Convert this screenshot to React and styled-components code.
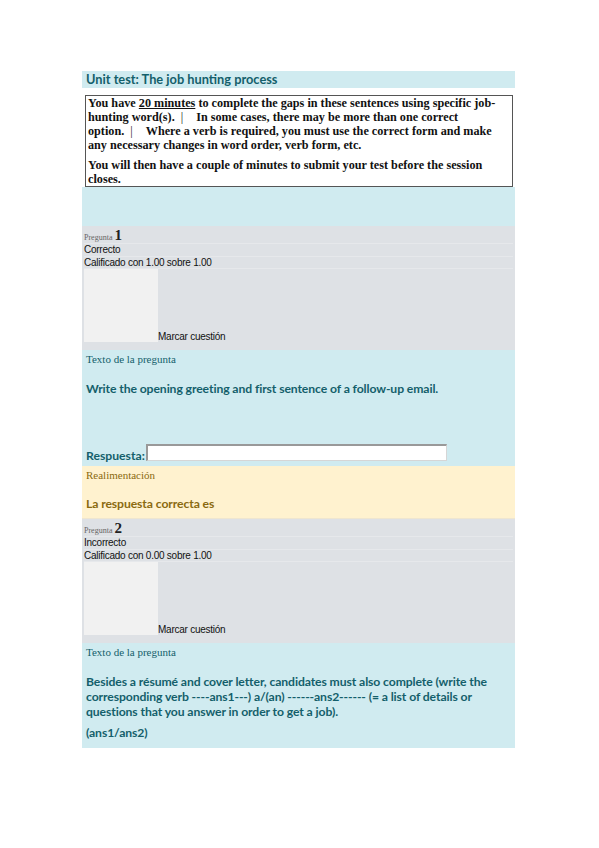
import React from 'react';
import styled, { createGlobalStyle } from 'styled-components';

const colors = {
  blue: '#d0ebf0',
  gray: '#dee1e5',
  yellow: '#fff2cf',
  flag: '#f1f1f1',
  teal: '#145f6b',
  olive: '#8a6a10',
};

const GlobalStyle = createGlobalStyle`
  body {
    margin: 0;
    background: #fff;
    font-family: "Liberation Sans", Arial, sans-serif;
  }
`;

const Page = styled.main`
  width: 433px;
  margin-left: 82px;
  padding-top: 71px;
`;

const TitleBar = styled.h2`
  margin: 0;
  height: 17px;
  background: ${colors.blue};
  color: ${colors.teal};
  font-family: Lato, "Open Sans", sans-serif;
  font-weight: 700;
  font-size: 12.8px;
  line-height: 17px;
  padding-left: 4px;
`;

const Intro = styled.section`
  padding: 7px 2px 0 3px;
  background: #fff;
`;

const IntroSpacer = styled.div`
  height: 39px;
  background: ${colors.blue};
`;

const InfoBox = styled.div`
  background: #fff;
  border: 1px solid #555;
  padding: 0 15.5px 0 2px;
  font-family: "Liberation Serif", "Times New Roman", serif;
  font-weight: 700;
  font-size: 12.2px;
  line-height: 14px;
  color: #111;

  p {
    margin: 0;
  }
  p + p {
    margin-top: 6px;
  }
`;

const Sep = styled.span`
  display: inline-block;
  margin: 0 13px 0 6px;
  font-weight: 400;
  color: #222;
`;

const Info = styled.div`
  background: ${colors.gray};
  padding: 0 2px 8px 2px;
`;

const InfoRow = styled.div`
  font-family: "Liberation Sans", Arial, sans-serif;
  font-size: 10px;
  letter-spacing: -0.25px;
  color: #111;
  height: ${({ h }) => h}px;
  line-height: ${({ h }) => h}px;
  border-bottom: 1px solid #e6e8eb;
`;

const QNumberRow = styled.div`
  height: 17px;
  display: flex;
  align-items: flex-end;
  border-bottom: 1px solid #e6e8eb;
  font-family: "Liberation Serif", "Times New Roman", serif;
`;

const QLabel = styled.span`
  font-size: 8px;
  color: #666;
  margin-right: 2px;
  padding-bottom: 1px;
`;

const QNumber = styled.span`
  font-size: 15px;
  font-weight: 700;
  color: #222;
  line-height: 15px;
`;

const FlagRow = styled.div`
  display: flex;
  align-items: flex-end;
`;

const FlagBox = styled.div`
  width: 74px;
  height: 73px;
  background: ${colors.flag};
`;

const FlagText = styled.span`
  font-size: 10px;
  letter-spacing: -0.25px;
  color: #111;
  line-height: 11px;
`;

const Content = styled.div`
  background: ${colors.blue};
  padding: 2px 4px 3px 4px;
  height: ${({ h }) => h}px;
  box-sizing: border-box;
  display: flex;
  flex-direction: column;
`;

const SmallHeading = styled.div`
  font-family: "Liberation Serif", "Times New Roman", serif;
  font-size: 11px;
  line-height: 14px;
  color: ${({ tone }) => tone};
`;

const QText = styled.p`
  margin: ${({ top }) => top}px 0 0;
  font-family: Lato, "Open Sans", sans-serif;
  font-weight: 700;
  font-size: 12.2px;
  letter-spacing: -0.1px;
  line-height: 15px;
  color: ${({ tone }) => tone || colors.teal};
`;

const AnswerRow = styled.div`
  margin-top: auto;
  display: flex;
  align-items: flex-end;
  gap: 1px;
  font-family: Lato, "Open Sans", sans-serif;
  font-weight: 700;
  font-size: 12.2px;
  color: ${colors.teal};
`;

const AnswerInput = styled.input`
  width: 301px;
  height: 17px;
  box-sizing: border-box;
  border: 1px solid #d6d6d6;
  border-top: 2px solid #999;
  border-left: 2px solid #999;
  background: #fff;
  margin: 0 0 2px;
`;

const Feedback = styled.div`
  background: ${colors.yellow};
  height: 53px;
  padding: 2px 4px 0;
  box-sizing: border-box;
  border-bottom: 1px solid #efe6d0;
`;

const Question = ({ num, state, grade, contentHeight, children }) => (
  <section>
    <Info>
      <QNumberRow>
        <QLabel>Pregunta</QLabel>
        <QNumber>{num}</QNumber>
      </QNumberRow>
      <InfoRow h={12}>{state}</InfoRow>
      <InfoRow h={11}>{grade}</InfoRow>
      <FlagRow>
        <FlagBox />
        <FlagText>Marcar cuestión</FlagText>
      </FlagRow>
    </Info>
    <Content h={contentHeight}>{children}</Content>
  </section>
);

const App = () => (
  <>
    <GlobalStyle />
    <Page>
      <TitleBar>Unit test: The job hunting process</TitleBar>
      <Intro>
        <InfoBox>
          <p>
            You have <u>20 minutes</u> to complete the gaps in these sentences
            using specific job-hunting word(s).<Sep>|</Sep>In some cases, there
            may be more than one correct option.<Sep>|</Sep>Where a verb is
            required, you must use the correct form and make any necessary
            changes in word order, verb form, etc.
          </p>
          <p>
            You will then have a couple of minutes to submit your test before
            the session closes.
          </p>
        </InfoBox>
      </Intro>
      <IntroSpacer />

      <Question
        num="1"
        state="Correcto"
        grade="Calificado con 1.00 sobre 1.00"
        contentHeight={116}
      >
        <SmallHeading tone={colors.teal}>Texto de la pregunta</SmallHeading>
        <QText top={15}>
          Write the opening greeting and first sentence of a follow-up email.
        </QText>
        <AnswerRow>
          Respuesta:
          <AnswerInput type="text" />
        </AnswerRow>
      </Question>
      <Feedback>
        <SmallHeading tone={colors.olive}>Realimentación</SmallHeading>
        <QText as="div" top={14} tone={colors.olive}>
          La respuesta correcta es
        </QText>
      </Feedback>

      <Question
        num="2"
        state="Incorrecto"
        grade="Calificado con 0.00 sobre 1.00"
        contentHeight={105}
      >
        <SmallHeading tone={colors.teal}>Texto de la pregunta</SmallHeading>
        <QText top={15}>
          Besides a résumé and cover letter, candidates must also complete
          (write the corresponding verb ----ans1---) a/(an) ------ans2------ (=
          a list of details or questions that you answer in order to get a
          job).
        </QText>
        <QText top={6}>(ans1/ans2)</QText>
      </Question>
    </Page>
  </>
);

export default App;
